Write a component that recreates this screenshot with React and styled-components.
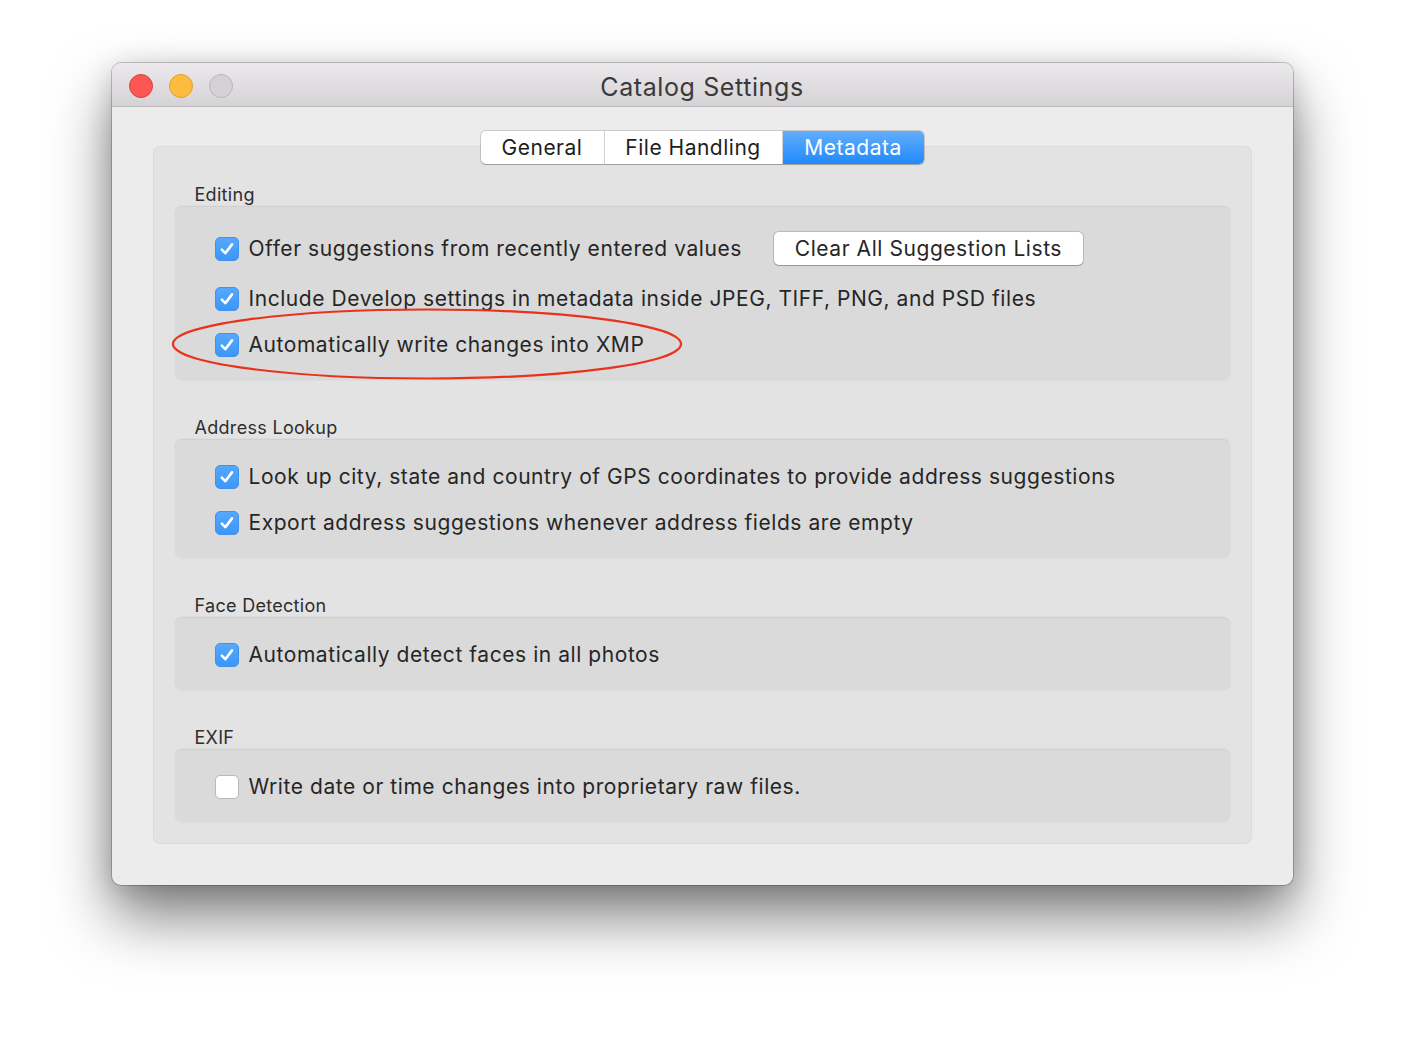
import React from "react";
import styled, { createGlobalStyle } from "styled-components";

const GlobalStyle = createGlobalStyle`
    html, body {
        margin: 0;
        padding: 0;
        background: #ffffff;
    }
    body {
        font-family: Inter, "Noto Sans", "Liberation Sans", sans-serif;
        color: #262626;
        -webkit-font-smoothing: antialiased;
    }
`;

const Page = styled.div`
    width: 1404px;
    height: 1044px;
    padding-top: 63px;
    box-sizing: border-box;
    display: flex;
    justify-content: center;
    align-items: flex-start;
`;

const Window = styled.div`
    position: relative;
    width: 1181px;
    background: #ececec;
    border-radius: 9px;
    box-shadow: 0 0 0 1px rgba(0, 0, 0, 0.2), 0 32px 60px rgba(0, 0, 0, 0.5),
        0 4px 26px rgba(0, 0, 0, 0.16);
`;

const TitleBar = styled.div`
    position: relative;
    height: 43px;
    border-bottom: 1px solid #bdbbbd;
    border-radius: 9px 9px 0 0;
    background: linear-gradient(#ebe9eb, #d5d3d5);
    display: flex;
    align-items: center;
    justify-content: center;
`;

const Lights = styled.div`
    position: absolute;
    left: 17px;
    top: 11px;
    display: flex;
    gap: 16px;
`;

const Light = styled.span`
    width: 22px;
    height: 22px;
    border-radius: 50%;
    background: ${({ color }) => color};
    border: 1px solid ${({ edge }) => edge};
`;

const Title = styled.div`
    font-size: 25px;
    color: #3a3a3a;
    letter-spacing: 0.6px;
    padding-top: 4px;
`;

const Body = styled.div`
    padding: 23px 41px 41px;
    display: flex;
    flex-direction: column;
    align-items: center;
`;

const Segmented = styled.div`
    display: flex;
    height: 33px;
    margin-top: 1px;
    box-sizing: border-box;
    border-radius: 5px;
    background: #fff;
    box-shadow: 0 0 0 1px rgba(0, 0, 0, 0.14), 0 1px 1px rgba(0, 0, 0, 0.18);
    position: relative;
    z-index: 2;
    margin-bottom: -18px;
`;

const Segment = styled.div`
    width: ${({ w }) => w}px;
    display: flex;
    align-items: center;
    justify-content: center;
    font-size: 21px;
    letter-spacing: 0.5px;
    color: ${({ active }) => (active ? "#fff" : "#1e1e1e")};
    background: ${({ active }) =>
        active ? "linear-gradient(#62aefb, #2189fb)" : "transparent"};
    border-left: ${({ first }) => (first ? "none" : "1px solid #d2d2d2")};
    border-radius: ${({ first, last }) =>
        first ? "5px 0 0 5px" : last ? "0 5px 5px 0" : "0"};
`;

const Panel = styled.div`
    width: 100%;
    box-sizing: border-box;
    background: #e3e3e3;
    border-radius: 7px;
    box-shadow: inset 0 0 0 1px rgba(0, 0, 0, 0.03);
    padding: 38px 22px 22px;
    display: flex;
    flex-direction: column;
`;

const Group = styled.div`
    position: relative;
    margin-top: ${({ first }) => (first ? "0" : "37px")};
`;

const GroupLabel = styled.div`
    height: 22px;
    line-height: 22px;
    padding-left: 20px;
    font-size: 18px;
    color: #2e2e2e;
    letter-spacing: 0.3px;
`;

const GroupBox = styled.div`
    background: #dadada;
    border-radius: 7px;
    box-shadow: inset 0 1px 0 rgba(0, 0, 0, 0.04), 0 0 0 1px rgba(0, 0, 0, 0.025);
    padding: 26px 40px 23px;
    display: flex;
    flex-direction: column;
    gap: 22px;
`;

const Row = styled.div`
    display: flex;
    align-items: center;
    min-height: 24px;
`;

const Box = styled.span`
    width: 24px;
    height: 24px;
    flex: none;
    box-sizing: border-box;
    border-radius: 5px;
    display: flex;
    align-items: center;
    justify-content: center;
    background: ${({ checked }) =>
        checked ? "linear-gradient(#56a8fc, #3c97f9)" : "#fff"};
    border: 1px solid
        ${({ checked }) => (checked ? "#3f93ee" : "#b9b9b9")};
`;

const Text = styled.span`
    margin-left: 10px;
    font-size: 21px;
    line-height: 24px;
    letter-spacing: 0.56px;
    color: #262626;
    white-space: nowrap;
`;

const Button = styled.div`
    margin-left: 32px;
    height: 33px;
    width: 309px;
    box-sizing: border-box;
    border-radius: 5px;
    background: #fff;
    box-shadow: 0 0 0 1px rgba(0, 0, 0, 0.14), 0 1px 1px rgba(0, 0, 0, 0.2);
    display: flex;
    align-items: center;
    justify-content: center;
    font-size: 21px;
    letter-spacing: 0.56px;
    color: #262626;
`;

const Ellipse = styled.svg`
    position: absolute;
    left: 58px;
    top: 244px;
    pointer-events: none;
`;

const Check = ({ checked = true, children, extra }) => (
    <Row>
        <Box checked={checked}>
            {checked && (
                <svg width="18" height="18" viewBox="0 0 18 18">
                    <path
                        d="M3.8 9.6 L7.3 13.2 L14 4.4"
                        fill="none"
                        stroke="#fff"
                        strokeWidth="2.6"
                        strokeLinecap="round"
                        strokeLinejoin="round"
                    />
                </svg>
            )}
        </Box>
        <Text>{children}</Text>
        {extra}
    </Row>
);

const App = () => {
    return (
        <>
            <GlobalStyle />
            <Page>
                <Window>
                    <TitleBar>
                        <Lights>
                            <Light color="#fc5753" edge="#de3f3a" />
                            <Light color="#fdbc40" edge="#dfa02f" />
                            <Light color="#d4d2d4" edge="#b8b6b8" />
                        </Lights>
                        <Title>Catalog Settings</Title>
                    </TitleBar>
                    <Body>
                        <Segmented>
                            <Segment w={123} first>
                                General
                            </Segment>
                            <Segment w={177}>File Handling</Segment>
                            <Segment w={141} active last>
                                Metadata
                            </Segment>
                        </Segmented>
                        <Panel>
                            <Group first>
                                <GroupLabel>Editing</GroupLabel>
                                <GroupBox>
                                    <Check
                                        extra={
                                            <Button>Clear All Suggestion Lists</Button>
                                        }
                                    >
                                        Offer suggestions from recently entered values
                                    </Check>
                                    <Check>
                                        Include Develop settings in metadata inside JPEG,
                                        TIFF, PNG, and PSD files
                                    </Check>
                                    <Check>Automatically write changes into XMP</Check>
                                </GroupBox>
                            </Group>
                            <Group>
                                <GroupLabel>Address Lookup</GroupLabel>
                                <GroupBox>
                                    <Check>
                                        Look up city, state and country of GPS coordinates
                                        to provide address suggestions
                                    </Check>
                                    <Check>
                                        Export address suggestions whenever address fields
                                        are empty
                                    </Check>
                                </GroupBox>
                            </Group>
                            <Group>
                                <GroupLabel>Face Detection</GroupLabel>
                                <GroupBox>
                                    <Check>Automatically detect faces in all photos</Check>
                                </GroupBox>
                            </Group>
                            <Group>
                                <GroupLabel>EXIF</GroupLabel>
                                <GroupBox>
                                    <Check checked={false}>
                                        Write date or time changes into proprietary raw
                                        files.
                                    </Check>
                                </GroupBox>
                            </Group>
                        </Panel>
                    </Body>
                    <Ellipse width="514" height="76" viewBox="0 0 514 76">
                        <ellipse
                            cx="257"
                            cy="37"
                            rx="254"
                            ry="34.5"
                            fill="none"
                            stroke="#e8321c"
                            strokeWidth="2.2"
                        />
                    </Ellipse>
                </Window>
            </Page>
        </>
    );
};

export default App;
